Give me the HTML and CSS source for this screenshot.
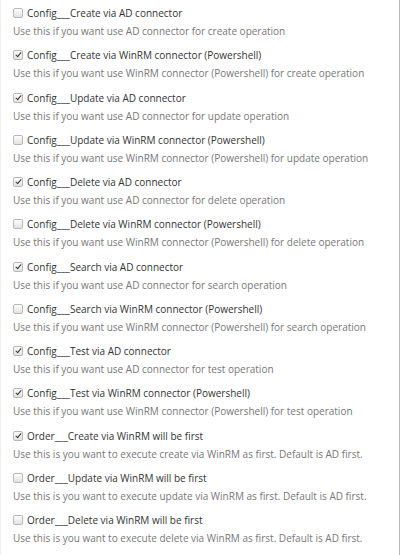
FILE: index.html
```html
<!doctype html>
<html>
    <head>
        <title>Connector settings</title>
        <link rel="stylesheet" href="styles.css">
    </head>
    <body>
        <div class="panel">
            <div class="field">
                <label><input type="checkbox"> Config___Create via AD connector</label>
                <p class="help">Use this if you want use AD connector for create operation</p>
            </div>
            <div class="field">
                <label><input type="checkbox" checked> Config___Create via WinRM connector (Powershell)</label>
                <p class="help">Use this if you want use WinRM connector (Powershell) for create operation</p>
            </div>
            <div class="field">
                <label><input type="checkbox" checked> Config___Update via AD connector</label>
                <p class="help">Use this if you want use AD connector for update operation</p>
            </div>
            <div class="field">
                <label><input type="checkbox"> Config___Update via WinRM connector (Powershell)</label>
                <p class="help">Use this if you want use WinRM connector (Powershell) for update operation</p>
            </div>
            <div class="field">
                <label><input type="checkbox" checked> Config___Delete via AD connector</label>
                <p class="help">Use this if you want use AD connector for delete operation</p>
            </div>
            <div class="field">
                <label><input type="checkbox"> Config___Delete via WinRM connector (Powershell)</label>
                <p class="help">Use this if you want use WinRM connector (Powershell) for delete operation</p>
            </div>
            <div class="field">
                <label><input type="checkbox" checked> Config___Search via AD connector</label>
                <p class="help">Use this if you want use AD connector for search operation</p>
            </div>
            <div class="field">
                <label><input type="checkbox"> Config___Search via WinRM connector (Powershell)</label>
                <p class="help">Use this if you want use WinRM connector (Powershell) for search operation</p>
            </div>
            <div class="field">
                <label><input type="checkbox" checked> Config___Test via AD connector</label>
                <p class="help">Use this if you want use AD connector for test operation</p>
            </div>
            <div class="field">
                <label><input type="checkbox" checked> Config___Test via WinRM connector (Powershell)</label>
                <p class="help">Use this if you want use WinRM connector (Powershell) for test operation</p>
            </div>
            <div class="field">
                <label><input type="checkbox" checked> Order___Create via WinRM will be first</label>
                <p class="help">Use this is you want to execute create via WinRM as first. Default is AD first.</p>
            </div>
            <div class="field">
                <label><input type="checkbox"> Order___Update via WinRM will be first</label>
                <p class="help">Use this is you want to execute update via WinRM as first. Default is AD first.</p>
            </div>
            <div class="field">
                <label><input type="checkbox"> Order___Delete via WinRM will be first</label>
                <p class="help">Use this is you want to execute delete via WinRM as first. Default is AD first.</p>
            </div>
        </div>
    </body>
</html>
```

FILE: styles.css
```css
* {
    margin: 0;
    padding: 0;
    box-sizing: border-box;
}
body {
    background: #fff;
    font-family: "Open Sans", sans-serif;
    font-size: 10px;
}
.panel {
    width: 400px;
    height: 555px;
    padding: 5px 10px 0 12px;
    border-left: 1px solid #eee;
    border-right: 1px solid #bbb;
    overflow: hidden;
}
.field {
    margin-bottom: 8.25px;
}
.field label {
    display: flex;
    align-items: center;
    line-height: 16px;
    color: #333;
    margin-bottom: 2px;
}
.field input {
    appearance: none;
    width: 10px;
    height: 10px;
    margin-right: 4px;
    border: 1px solid #b8b8b8;
    border-radius: 2px;
    background: linear-gradient(#fdfdfd, #e2e2e2);
    position: relative;
    flex: none;
}
.field input:checked::after {
    content: "";
    position: absolute;
    left: 2.5px;
    top: 0;
    width: 2px;
    height: 5px;
    border: solid #333;
    border-width: 0 1.6px 1.6px 0;
    transform: rotate(40deg);
}
.help {
    line-height: 16px;
    color: #777;
}
```
